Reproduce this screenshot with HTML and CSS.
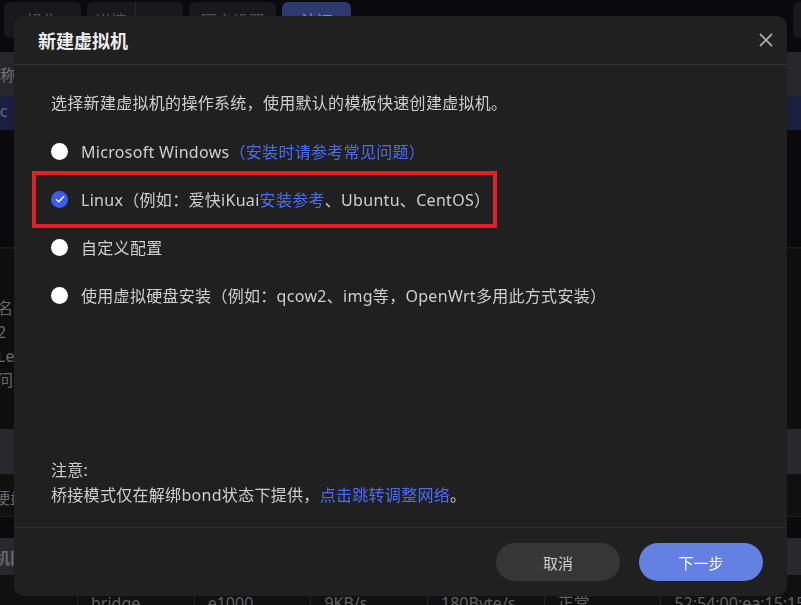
FILE: index.html
```html
<!DOCTYPE html>
<html lang="zh-CN">
<head>
    <meta charset="UTF-8">
    <meta name="viewport" content="width=device-width, initial-scale=1.0">
    <title>新建虚拟机</title>
    <link rel="stylesheet" href="styles.css">
</head>
<body>
    <div class="page">
        <nav class="tabs">
            <span class="tab tab-edge"></span>
            <span class="tab">操作</span>
            <span class="tab tab-split"><span>详情</span><span></span></span>
            <span class="tab">网卡设置</span>
            <span class="tab active">认证</span>
            <span class="tab-fill"></span>
            <span class="tab tab-edge"></span>
        </nav>

        <div class="vm-table">
            <div class="thead">名称</div>
            <div class="row selected">sc</div>
            <div class="tbody"></div>
        </div>

        <div class="info">
            <div class="info-line">名称</div>
            <div class="info-line">2</div>
            <div class="info-line">Legacy</div>
            <div class="info-line">问题</div>
        </div>

        <div class="section-title"></div>
        <div class="disk-row">硬盘</div>
        <div class="gap-row"></div>
        <div class="section-title net">机网</div>
        <div class="net-head"></div>
        <div class="net-row">
            <span></span>
            <span>bridge</span>
            <span>e1000</span>
            <span>9KB/s</span>
            <span>180Byte/s</span>
            <span>正常</span>
            <span>52:54:00:ea:15:15</span>
        </div>
    </div>

    <div class="mask"></div>

    <div class="modal">
        <div class="modal-header">
            <h2>新建虚拟机</h2>
            <button class="close" aria-label="关闭">
                <svg width="14" height="14" viewBox="0 0 14 14">
                    <path d="M1 1L13 13M13 1L1 13" stroke="#a8a8a8" stroke-width="1.8" fill="none"/>
                </svg>
            </button>
        </div>

        <div class="modal-body">
            <p class="intro">选择新建虚拟机的操作系统，使用默认的模板快速创建虚拟机。</p>

            <div class="options">
                <label class="option">
                    <span class="radio"></span>
                    <span>Microsoft Windows<a class="link">（安装时请参考常见问题）</a></span>
                </label>
                <label class="option checked marked">
                    <span class="radio">
                        <svg width="10" height="8" viewBox="0 0 10 8">
                            <path d="M1 4.2L3.8 6.8L9 1.2" stroke="#fff" stroke-width="1.4" fill="none"/>
                        </svg>
                    </span>
                    <span>Linux（例如：爱快iKuai<a class="link">安装参考</a>、Ubuntu、CentOS）</span>
                </label>
                <label class="option">
                    <span class="radio"></span>
                    <span>自定义配置</span>
                </label>
                <label class="option">
                    <span class="radio"></span>
                    <span>使用虚拟硬盘安装（例如：qcow2、img等，OpenWrt多用此方式安装）</span>
                </label>
            </div>

            <div class="notice">
                <p>注意:</p>
                <p>桥接模式仅在解绑bond状态下提供，<a class="link">点击跳转调整网络</a>。</p>
            </div>
        </div>

        <div class="modal-footer">
            <button class="btn btn-cancel">取消</button>
            <button class="btn btn-primary">下一步</button>
        </div>
    </div>
</body>
</html>
```

FILE: styles.css
```css
* {
    box-sizing: border-box;
}

body {
    margin: 0;
    font-family: "Noto Sans", "Noto Sans CJK SC", sans-serif;
    background-color: #0b0b0d;
    overflow: hidden;
}

.page {
    width: 801px;
    height: 605px;
    overflow: hidden;
    background-color: #0b0b0d;
    color: #6a6a6a;
    font-size: 16px;
}

/* tabs behind the dialog */
.tabs {
    display: flex;
    gap: 6px;
    height: 52px;
    padding-top: 2px;
    align-items: flex-start;
}

.tab {
    height: 36px;
    border-radius: 6px;
    background-color: #1b1b1d;
    display: flex;
    align-items: center;
    justify-content: center;
    color: #555;
    font-size: 16px;
    flex-shrink: 0;
}

.tab:nth-child(1) { width: 3px; margin-left: -6px; margin-right: 1px; border-radius: 0 6px 6px 0; }
.tab:nth-child(2) { width: 77px; }
.tab:nth-child(3) { width: 96px; }
.tab:nth-child(4) { width: 87px; }
.tab:nth-child(5) { width: 69px; }
.tab:last-child { width: 40px; margin-right: -32px; }

.tab-split span {
    flex: 1;
    text-align: center;
}

.tab-split span + span {
    border-left: 1px solid #2a2a2c;
    align-self: stretch;
}

.tab.active {
    background-color: #313d76;
    color: #8a96c8;
}

.tab-fill {
    flex: 1;
}

.vm-table .thead {
    height: 44px;
    background-color: #2a2a2e;
    padding: 10px 0 0 0;
    text-indent: -16px;
    color: #777;
}

.vm-table .row {
    height: 34px;
    background-color: #1b2140;
    color: #6a7090;
    text-indent: -8px;
    padding-top: 4px;
}

.vm-table .tbody {
    height: 118px;
    border-bottom: 1px solid #1e1e20;
}

.info {
    height: 181px;
    padding-top: 47px;
    background-color: #0f0f10;
    border-top: 1px solid #191919;
}

.info-line {
    height: 24px;
    line-height: 24px;
    text-indent: -3px;
    color: #707070;
}

.section-title {
    height: 45px;
    background-color: #2c2c30;
}

.disk-row {
    height: 43px;
    line-height: 48px;
    text-indent: -6px;
    background-color: #111112;
    border-bottom: 1px solid #222;
    color: #707070;
}

.gap-row {
    height: 21px;
}

.section-title.net {
    height: 37px;
    line-height: 40px;
    text-indent: -6px;
    font-weight: bold;
    color: #6c6c70;
}

.net-head {
    height: 14px;
    background-color: #111112;
}

.net-row {
    display: grid;
    grid-template-columns: 77px repeat(6, 116.7px);
    height: 20px;
    background-color: #111112;
    line-height: 28px;
    color: #666;
}

.net-row span {
    border-left: 1px solid #262626;
    padding-left: 13px;
    white-space: nowrap;
}

.net-row span:first-child {
    border-left: none;
}

/* dialog */
.mask {
    position: fixed;
    inset: 0;
    background: rgba(0, 0, 0, 0.05);
}

.modal {
    position: fixed;
    left: 14px;
    top: 16px;
    width: 773px;
    height: 580px;
    background-color: #202020;
    border-radius: 10px;
    display: flex;
    flex-direction: column;
    color: #cfcfcf;
}

.modal-header {
    height: 49px;
    padding: 0 14px 0 24px;
    display: flex;
    align-items: center;
    justify-content: space-between;
    border-bottom: 1px solid #343434;
}

.modal-header h2 {
    margin: 0;
    font-size: 18px;
    font-weight: bold;
    color: #ededed;
}

.close {
    background: none;
    border: none;
    padding: 0;
    width: 14px;
    height: 14px;
    cursor: pointer;
    display: flex;
}

.modal-body {
    flex: 1;
    padding: 26px 37px 19px 37px;
    display: flex;
    flex-direction: column;
    font-size: 16px;
    letter-spacing: 0.3px;
}

.intro {
    margin: 0 0 12px 0;
    line-height: 24px;
}

.link {
    color: #4b6df6;
    cursor: pointer;
}

.option {
    position: relative;
    display: flex;
    align-items: center;
    gap: 13px;
    height: 48px;
    white-space: nowrap;
}

.radio {
    width: 17px;
    height: 17px;
    border-radius: 50%;
    background-color: #fff;
    display: flex;
    align-items: center;
    justify-content: center;
    flex-shrink: 0;
}

.option.checked .radio {
    background-color: #3c5cf0;
}

.option.marked::after {
    content: "";
    box-sizing: border-box;
    position: absolute;
    left: -19px;
    top: -4px;
    width: 465px;
    height: 57px;
    border: 4px solid #e2202b;
    pointer-events: none;
}

.notice {
    margin-top: auto;
}

.notice p {
    margin: 0;
    line-height: 25px;
}

.modal-footer {
    height: 69px;
    border-top: 1px solid #2c2c2c;
    display: flex;
    justify-content: flex-end;
    align-items: center;
    gap: 19px;
    padding: 0 24px 0 0;
}

.btn {
    width: 124px;
    height: 38px;
    border-radius: 19px;
    border: none;
    font-family: inherit;
    font-size: 15px;
    cursor: pointer;
}

.btn-cancel {
    background-color: #363636;
    color: #cfcfcf;
}

.btn-primary {
    background-color: #6380e2;
    color: #fff;
}
```
